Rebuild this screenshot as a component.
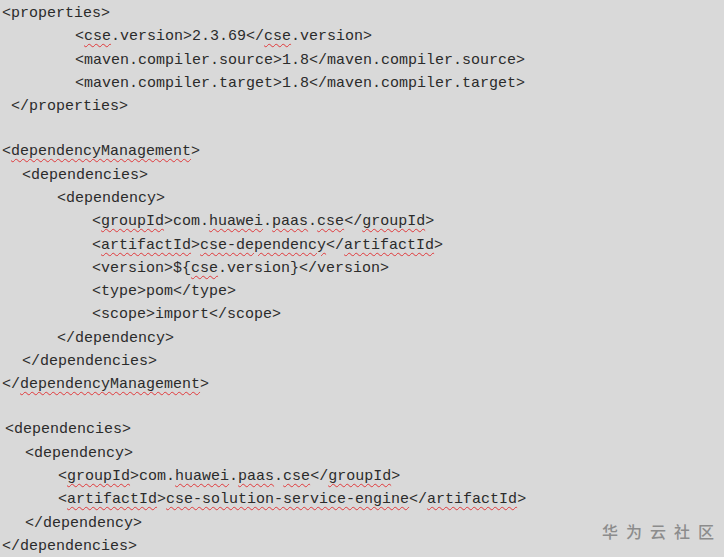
import React from 'react';

// spell-check squiggle under a word
function W({ children }) {
  return (
    <span className="underline decoration-wavy decoration-[#e0393b] decoration-1 underline-offset-[3px]">
      {children}
    </span>
  );
}

function Line({ indent, children }) {
  return (
    <div className="h-[23.3px] leading-[23.3px] whitespace-pre" style={{ paddingLeft: indent }}>
      {children}
    </div>
  );
}

function Blank() {
  return <div className="h-[21.85px]" />;
}

export default function App() {
  return (
    <div className="relative w-[724px] h-[557px] overflow-hidden pt-[2px] bg-[#d9d9d9] text-[#2b2b2b] text-[15px] font-['Liberation_Mono','Courier_New',monospace]">
      <Line indent={2}>{'<properties>'}</Line>
      <Line indent={75}>
        {'<'}<W>cse</W>{'.version>2.3.69</'}<W>cse</W>{'.version>'}
      </Line>
      <Line indent={75}>{'<maven.compiler.source>1.8</maven.compiler.source>'}</Line>
      <Line indent={75}>{'<maven.compiler.target>1.8</maven.compiler.target>'}</Line>
      <Line indent={11}>{'</properties>'}</Line>
      <Blank />

      <Line indent={2}>
        {'<'}<W>dependencyManagement</W>{'>'}
      </Line>
      <Line indent={22}>{'<dependencies>'}</Line>
      <Line indent={57}>{'<dependency>'}</Line>
      <Line indent={92}>
        {'<'}<W>groupId</W>{'>com.'}<W>huawei</W>{'.'}<W>paas</W>{'.'}<W>cse</W>{'</'}<W>groupId</W>{'>'}
      </Line>
      <Line indent={92}>
        {'<'}<W>artifactId</W>{'>'}<W>cse-dependency</W>{'</'}<W>artifactId</W>{'>'}
      </Line>
      <Line indent={92}>
        {'<version>${'}<W>cse</W>{'.version}</version>'}
      </Line>
      <Line indent={92}>{'<type>pom</type>'}</Line>
      <Line indent={92}>{'<scope>import</scope>'}</Line>
      <Line indent={57}>{'</dependency>'}</Line>
      <Line indent={22}>{'</dependencies>'}</Line>
      <Line indent={2}>
        {'</'}<W>dependencyManagement</W>{'>'}
      </Line>
      <Blank />

      <Line indent={5}>{'<dependencies>'}</Line>
      <Line indent={25}>{'<dependency>'}</Line>
      <Line indent={58}>
        {'<'}<W>groupId</W>{'>com.'}<W>huawei</W>{'.'}<W>paas</W>{'.'}<W>cse</W>{'</'}<W>groupId</W>{'>'}
      </Line>
      <Line indent={58}>
        {'<'}<W>artifactId</W>{'>'}<W>cse-solution-service-engine</W>{'</'}<W>artifactId</W>{'>'}
      </Line>
      <Line indent={25}>{'</dependency>'}</Line>
      <Line indent={2}>{'</dependencies>'}</Line>

      {/* watermark */}
      <div className="absolute left-[602px] top-[520px] text-[16px] leading-[22px] tracking-[8px] font-medium text-[#8c8c8c] font-['Noto_Sans_CJK_SC',sans-serif]">
        华为云社区
      </div>
    </div>
  );
}
